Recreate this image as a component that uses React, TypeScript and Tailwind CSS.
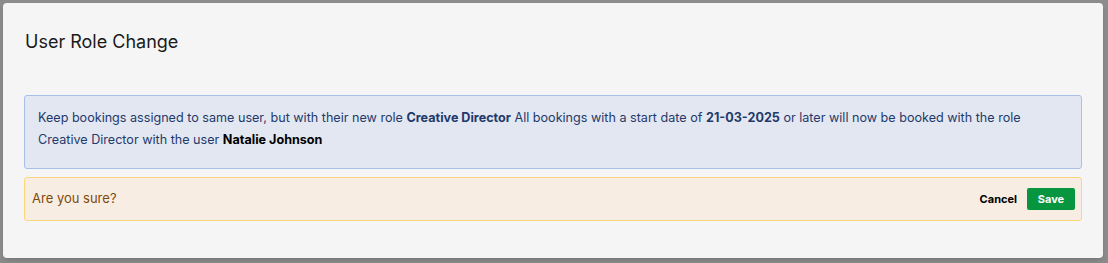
import React from 'react';

export default function App() {
  return (
    <div className="w-full h-[263px] bg-[#8c8c8c] p-[3px] overflow-hidden" style={{ fontFamily: 'Inter, "Noto Sans", sans-serif' }}>
      <div className="w-[1100px] h-[255px] bg-[#f5f5f5] rounded-[4px] shadow-md px-[21px]">
        <h1 className="pt-[25px] text-[18px] leading-[28px] text-[#1a1a1a] font-normal pl-[1px]">User Role Change</h1>

        <div className="mt-[39px] bg-[#e3e7f1] border border-[#a8bfe9] rounded-[3px] pl-[13px] pr-[24px] pt-[11px] pb-[17px] text-[12.6px] leading-[22px] text-[#1f3a6b]">
          <p>
            Keep bookings assigned to same user, but with their new role <b className="font-bold">Creative Director</b> All bookings with a start date of <b className="font-bold">21-03-2025</b> or later will now be booked with the role Creative Director with the user <b className="font-bold text-black">Natalie Johnson</b>
          </p>
        </div>

        <div className="mt-[8px] h-[44px] bg-[#f8ede2] border border-[#fcd67c] rounded-[3px] pl-[7px] pr-[6px] flex items-center justify-between">
          <span className="text-[13px] text-[#7c4a0e]">Are you sure?</span>
          <div className="flex items-center gap-[10px]">
            <button className="text-[11px] font-bold text-black">Cancel</button>
            <button className="w-[48px] h-[22px] bg-[#07963f] rounded-[2px] text-[11px] font-bold text-white">Save</button>
          </div>
        </div>
      </div>
    </div>
  );
}
